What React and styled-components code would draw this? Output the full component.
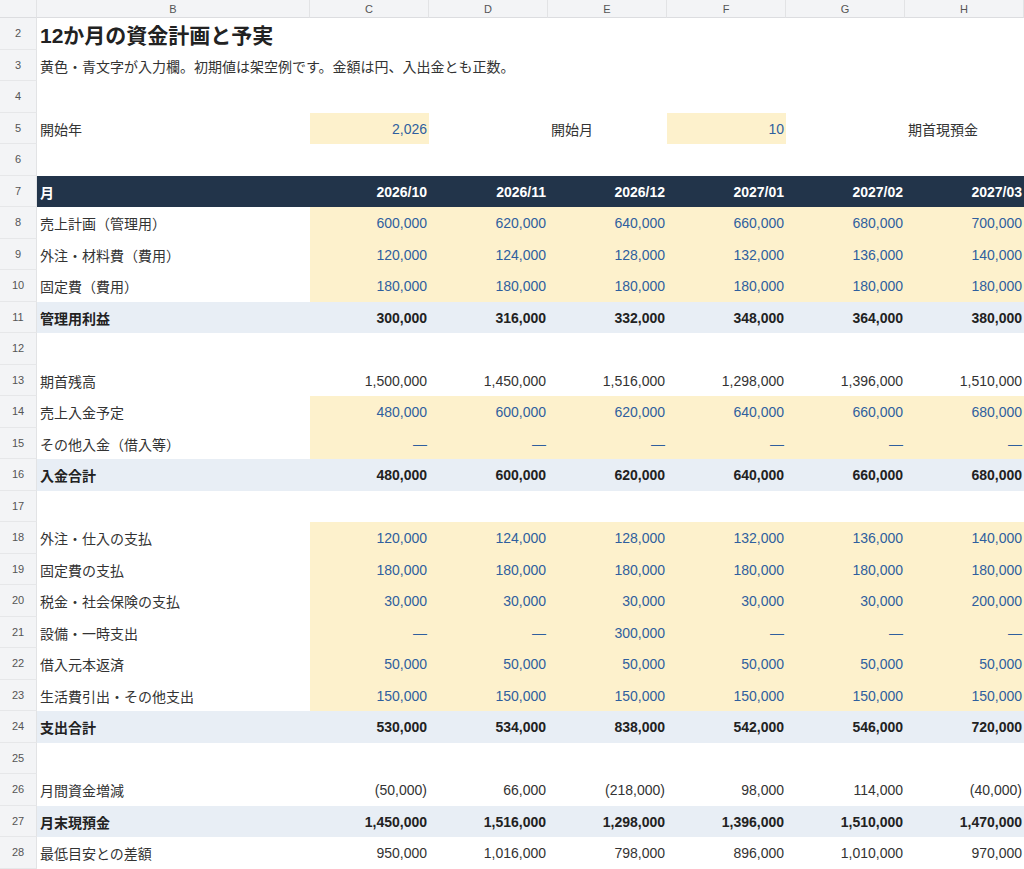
import React from 'react'
import styled, { createGlobalStyle } from 'styled-components'

const Global = createGlobalStyle`
  body { margin: 0; background: #fff; font-family: "Liberation Sans", "Noto Sans CJK JP", sans-serif; }
`

const Sheet = styled.div`
  display: grid;
  grid-template-columns: 37px 273px repeat(6, 119px);
  grid-template-rows: 18px repeat(27, 31.5px);
  width: 1024px;
  height: 869px;
  overflow: hidden;
  font-size: 14px;
  color: #333;
`

const ColHead = styled.div`
  background: #f3f4f6;
  border-right: 1px solid #e2e3e5;
  border-bottom: 1px solid #dcdde0;
  font-size: 11px;
  color: #555;
  display: flex;
  align-items: center;
  justify-content: center;
`

const RowHead = styled(ColHead)`
  font-size: 11px;
  border-bottom: 1px solid #e6e7e9;
`

const Cell = styled.div`
  display: flex;
  align-items: center;
  justify-content: ${p => (p.$right ? 'flex-end' : 'flex-start')};
  padding: 1px ${p => (p.$right ? '2px' : '3px')} 0;
  white-space: nowrap;
  overflow: visible;
  background: ${p => p.$bg || 'transparent'};
  color: ${p => p.$color || '#333'};
  font-weight: ${p => (p.$bold ? 700 : 400)};
  font-size: ${p => p.$size || '14px'};
  grid-column: ${p => p.$span || 'auto'};
`

const YELLOW = '#fdf1cc'
const BLUE = '#2f5f9e'
const NAVY = '#22344a'
const TOTAL = '#e8eef5'

const rows = [
  { n: 8, label: '売上計画（管理用）', input: true, v: ['600,000','620,000','640,000','660,000','680,000','700,000'] },
  { n: 9, label: '外注・材料費（費用）', input: true, v: ['120,000','124,000','128,000','132,000','136,000','140,000'] },
  { n: 10, label: '固定費（費用）', input: true, v: ['180,000','180,000','180,000','180,000','180,000','180,000'] },
  { n: 11, label: '管理用利益', total: true, v: ['300,000','316,000','332,000','348,000','364,000','380,000'] },
  { n: 12 },
  { n: 13, label: '期首残高', v: ['1,500,000','1,450,000','1,516,000','1,298,000','1,396,000','1,510,000'] },
  { n: 14, label: '売上入金予定', input: true, v: ['480,000','600,000','620,000','640,000','660,000','680,000'] },
  { n: 15, label: 'その他入金（借入等）', input: true, v: ['—','—','—','—','—','—'] },
  { n: 16, label: '入金合計', total: true, v: ['480,000','600,000','620,000','640,000','660,000','680,000'] },
  { n: 17 },
  { n: 18, label: '外注・仕入の支払', input: true, v: ['120,000','124,000','128,000','132,000','136,000','140,000'] },
  { n: 19, label: '固定費の支払', input: true, v: ['180,000','180,000','180,000','180,000','180,000','180,000'] },
  { n: 20, label: '税金・社会保険の支払', input: true, v: ['30,000','30,000','30,000','30,000','30,000','200,000'] },
  { n: 21, label: '設備・一時支出', input: true, v: ['—','—','300,000','—','—','—'] },
  { n: 22, label: '借入元本返済', input: true, v: ['50,000','50,000','50,000','50,000','50,000','50,000'] },
  { n: 23, label: '生活費引出・その他支出', input: true, v: ['150,000','150,000','150,000','150,000','150,000','150,000'] },
  { n: 24, label: '支出合計', total: true, v: ['530,000','534,000','838,000','542,000','546,000','720,000'] },
  { n: 25 },
  { n: 26, label: '月間資金増減', v: ['(50,000)','66,000','(218,000)','98,000','114,000','(40,000)'] },
  { n: 27, label: '月末現預金', total: true, v: ['1,450,000','1,516,000','1,298,000','1,396,000','1,510,000','1,470,000'] },
  { n: 28, label: '最低目安との差額', v: ['950,000','1,016,000','798,000','896,000','1,010,000','970,000'] },
]

const months = ['2026/10','2026/11','2026/12','2027/01','2027/02','2027/03']

function Empty({ n }) {
  return (
    <>
      <RowHead>{n}</RowHead>
      {Array.from({ length: 7 }, (_, i) => <Cell key={i} />)}
    </>
  )
}

export default function App() {
  return (
    <>
      <Global />
      <Sheet>
        <ColHead />
        {['B','C','D','E','F','G','H'].map(c => <ColHead key={c}>{c}</ColHead>)}

        <RowHead>2</RowHead>
        <Cell $span="2 / span 7" $bold $size="21px" $color="#222">12か月の資金計画と予実</Cell>
        <RowHead>3</RowHead>
        <Cell $span="2 / span 7">黄色・青文字が入力欄。初期値は架空例です。金額は円、入出金とも正数。</Cell>
        <Empty n={4} />
        <RowHead>5</RowHead>
        <Cell>開始年</Cell>
        <Cell $right $bg={YELLOW} $color={BLUE}>2,026</Cell>
        <Cell />
        <Cell>開始月</Cell>
        <Cell $right $bg={YELLOW} $color={BLUE}>10</Cell>
        <Cell />
        <Cell>期首現預金</Cell>
        <Empty n={6} />
        <RowHead>7</RowHead>
        <Cell $bg={NAVY} $color="#fff" $bold>月</Cell>
        {months.map(m => <Cell key={m} $right $bg={NAVY} $color="#fff" $bold>{m}</Cell>)}

        {rows.map(r => r.label ? (
          <React.Fragment key={r.n}>
            <RowHead>{r.n}</RowHead>
            <Cell $bg={r.total ? TOTAL : undefined} $bold={r.total} $color={r.total ? '#222' : '#333'}>{r.label}</Cell>
            {r.v.map((x, i) => (
              <Cell key={i} $right
                $bg={r.input ? YELLOW : r.total ? TOTAL : undefined}
                $color={r.input ? BLUE : r.total ? '#222' : '#333'}
                $bold={r.total}>{x}</Cell>
            ))}
          </React.Fragment>
        ) : <Empty key={r.n} n={r.n} />)}
      </Sheet>
    </>
  )
}
